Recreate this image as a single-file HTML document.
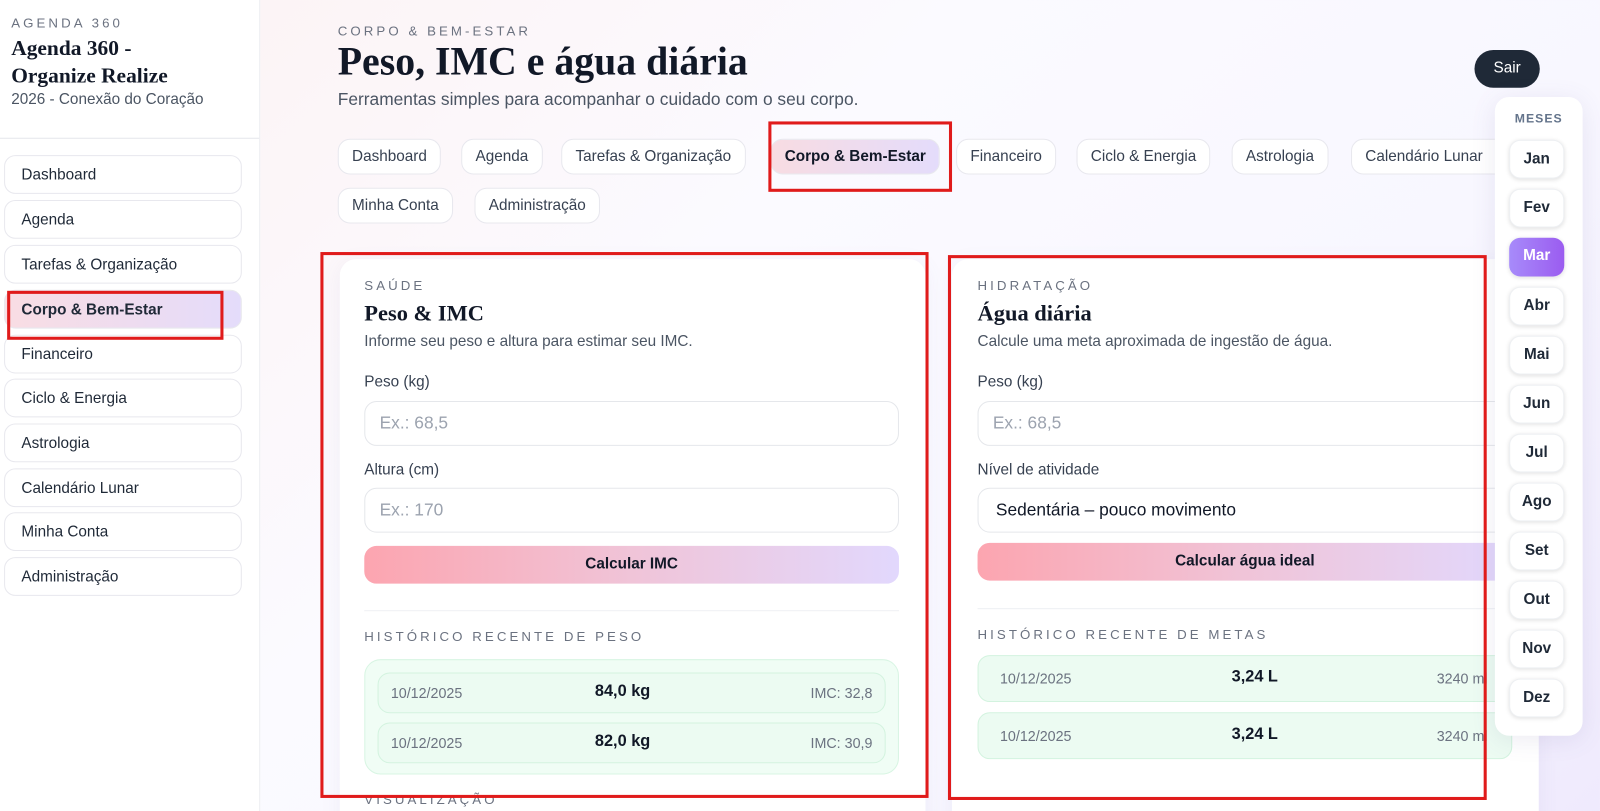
<!DOCTYPE html>
<html><head><meta charset="utf-8">
<style>
*{box-sizing:border-box;margin:0;padding:0}
html,body{width:1600px;height:811px;overflow:hidden}
body{font-family:"Liberation Sans",sans-serif;color:#1e293b;background:linear-gradient(135deg,#fdf2f2 0%,#fbfaff 40%,#f8f7ff 70%,#efeafd 100%);position:relative}
#w{position:absolute;left:0;top:0;width:1568px;height:795px;transform:scale(1.0204);transform-origin:0 0}
.sb{position:absolute;left:0;top:0;width:255px;height:800px;background:#fff;border-right:1px solid #eceef2}
.sb .k{position:absolute;left:11px;top:15px;font-size:13px;letter-spacing:3px;color:#6b7280}
.sb .t{position:absolute;left:11px;top:34px;font-family:"Liberation Serif",serif;font-weight:bold;font-size:21px;line-height:27px;color:#111827}
.sb .s{position:absolute;left:11px;top:89px;font-size:15px;color:#4b5563}
.sb hr{position:absolute;left:0;top:135px;width:254px;border:0;border-top:1px solid #e5e7eb}
.it{position:absolute;left:4px;width:233px;height:38px;border:1px solid #e8e8ee;border-radius:11px;font-size:15px;padding:10px 0 0 16px;color:#1f2937;background:#fff}
.it.a{background:linear-gradient(90deg,#f9dde3,#e4dcfb);font-weight:bold}
.pill{position:absolute;height:35px;border:1px solid #e8e8ee;border-radius:12px;background:#fff;font-size:15px;padding:8px 13px 0;color:#374151;white-space:nowrap}
.pill.a{background:linear-gradient(90deg,#f8dce2,#e4dcfb);font-weight:bold;color:#111827}
.card{position:absolute;background:#fff;border-radius:16px;box-shadow:0 4px 20px rgba(120,110,160,.08)}
.k2{font-size:13px;letter-spacing:3px;color:#6b7280}
.h2{font-family:"Liberation Serif",serif;font-weight:bold;font-size:22px;color:#111827}
.lab{position:absolute;font-size:15px;color:#374151}
.inp{position:absolute;height:44px;border:1px solid #e5e7eb;border-radius:12px;background:#fff;font-size:17px;color:#9ca3af;padding:11px 14px}
.btn{position:absolute;height:37px;border-radius:12px;background:linear-gradient(90deg,#fca5b0,#f0c4d8 50%,#e2d8fd);font-weight:bold;font-size:15px;text-align:center;padding-top:9px;color:#111827}
.hist{position:absolute;background:#f0fdf5;border:1px solid #d8f5e3;border-radius:16px}
.row{position:absolute;height:40px;border:1px solid #d3f3df;border-radius:12px;background:#ecfbf2;font-size:14px;color:#6b7280}
.row span{position:absolute;top:11px}
.row b{position:absolute;top:9px;font-size:16px;color:#111827}
.red{position:absolute;border:3px solid #e01b1b}
.mp{position:absolute;left:1465px;top:95px;width:86px;height:626px;background:#fff;border-radius:14px;box-shadow:0 4px 24px rgba(100,90,150,.12)}
.m{position:absolute;left:14px;width:54px;height:38px;border-radius:11px;background:#fff;box-shadow:0 1px 4px rgba(0,0,0,.12);border:1px solid #eef0f3;font-weight:bold;font-size:15px;text-align:center;padding-top:9px;color:#1f2937}
</style></head><body><div id="w">
<div class="sb">
<div class="k">AGENDA 360</div>
<div class="t">Agenda 360 -<br>Organize Realize</div>
<div class="s">2026 - Conexão do Coração</div>
<hr>
<div class="it" style="top:152px">Dashboard</div>
<div class="it" style="top:196px">Agenda</div>
<div class="it" style="top:240px">Tarefas &amp; Organização</div>
<div class="it a" style="top:284px">Corpo &amp; Bem-Estar</div>
<div class="it" style="top:328px">Financeiro</div>
<div class="it" style="top:371px">Ciclo &amp; Energia</div>
<div class="it" style="top:415px">Astrologia</div>
<div class="it" style="top:459px">Calendário Lunar</div>
<div class="it" style="top:502px">Minha Conta</div>
<div class="it" style="top:546px">Administração</div>
</div>

<div style="position:absolute;left:331px;top:23px" class="k2">CORPO &amp; BEM-ESTAR</div>
<div style="position:absolute;left:331px;top:38px;font-family:'Liberation Serif',serif;font-weight:bold;font-size:39px;color:#111827">Peso, IMC e água diária</div>
<div style="position:absolute;left:331px;top:88px;font-size:17px;color:#4b5563">Ferramentas simples para acompanhar o cuidado com o seu corpo.</div>
<div style="position:absolute;left:1445px;top:49px;width:64px;height:37px;border-radius:19px;background:#1f2937;color:#fff;font-size:15px;text-align:center;padding-top:9px">Sair</div>

<div class="pill" style="left:331px;top:136px">Dashboard</div>
<div class="pill" style="left:452px;top:136px">Agenda</div>
<div class="pill" style="left:550px;top:136px">Tarefas &amp; Organização</div>
<div class="pill a" style="left:755px;top:136px">Corpo &amp; Bem-Estar</div>
<div class="pill" style="left:937px;top:136px">Financeiro</div>
<div class="pill" style="left:1055px;top:136px">Ciclo &amp; Energia</div>
<div class="pill" style="left:1207px;top:136px">Astrologia</div>
<div class="pill" style="left:1324px;top:136px;width:160px">Calendário Lunar</div>
<div class="pill" style="left:331px;top:184px">Minha Conta</div>
<div class="pill" style="left:465px;top:184px">Administração</div>

<div class="card" style="left:333px;top:254px;width:574px;height:580px">
<div class="k2" style="position:absolute;left:24px;top:18px">SAÚDE</div>
<div class="h2" style="position:absolute;left:24px;top:40px">Peso &amp; IMC</div>
<div style="position:absolute;left:24px;top:72px;font-size:15px;color:#4b5563">Informe seu peso e altura para estimar seu IMC.</div>
<div class="lab" style="left:24px;top:112px">Peso (kg)</div>
<div class="inp" style="left:24px;top:139px;width:524px">Ex.: 68,5</div>
<div class="lab" style="left:24px;top:198px">Altura (cm)</div>
<div class="inp" style="left:24px;top:224px;width:524px">Ex.: 170</div>
<div class="btn" style="left:24px;top:281px;width:524px">Calcular IMC</div>
<div style="position:absolute;left:24px;top:344px;width:524px;border-top:1px solid #eef0f3"></div>
<div class="k2" style="position:absolute;left:24px;top:362px">HISTÓRICO RECENTE DE PESO</div>
<div class="hist" style="left:24px;top:392px;width:524px;height:113px">
<div class="row" style="left:12px;top:12px;width:498px"><span style="left:12px">10/12/2025</span><b style="left:212px">84,0 kg</b><span style="right:12px">IMC: 32,8</span></div>
<div class="row" style="left:12px;top:61px;width:498px"><span style="left:12px">10/12/2025</span><b style="left:212px">82,0 kg</b><span style="right:12px">IMC: 30,9</span></div>
</div>
<div class="k2" style="position:absolute;left:24px;top:522px">VISUALIZAÇÃO</div>
</div>

<div class="card" style="left:933px;top:254px;width:575px;height:580px">
<div class="k2" style="position:absolute;left:25px;top:18px">HIDRATAÇÃO</div>
<div class="h2" style="position:absolute;left:25px;top:40px">Água diária</div>
<div style="position:absolute;left:25px;top:72px;font-size:15px;color:#4b5563">Calcule uma meta aproximada de ingestão de água.</div>
<div class="lab" style="left:25px;top:112px">Peso (kg)</div>
<div class="inp" style="left:25px;top:139px;width:524px">Ex.: 68,5</div>
<div class="lab" style="left:25px;top:198px">Nível de atividade</div>
<div class="inp" style="left:25px;top:224px;width:524px;color:#111827;padding-left:17px">Sedentária – pouco movimento</div>
<div class="btn" style="left:25px;top:278px;width:524px">Calcular água ideal</div>
<div style="position:absolute;left:25px;top:342px;width:524px;border-top:1px solid #eef0f3"></div>
<div class="k2" style="position:absolute;left:25px;top:360px">HISTÓRICO RECENTE DE METAS</div>
<div class="row" style="left:25px;top:388px;width:524px;height:46px"><span style="left:21px;top:14px">10/12/2025</span><b style="left:248px;top:12px">3,24 L</b><span style="left:449px;top:14px">3240 ml</span></div>
<div class="row" style="left:25px;top:444px;width:524px;height:46px"><span style="left:21px;top:14px">10/12/2025</span><b style="left:248px;top:12px">3,24 L</b><span style="left:449px;top:14px">3240 ml</span></div>
</div>

<div class="mp">
<div style="position:absolute;left:0;width:86px;top:14px;text-align:center;font-size:12px;font-weight:bold;letter-spacing:1px;color:#64748b">MESES</div>
<div class="m" style="top:42px">Jan</div>
<div class="m" style="top:90px">Fev</div>
<div class="m" style="top:138px;background:linear-gradient(90deg,#a78bfa,#9b5cf0);color:#fff;border:0">Mar</div>
<div class="m" style="top:186px">Abr</div>
<div class="m" style="top:234px">Mai</div>
<div class="m" style="top:282px">Jun</div>
<div class="m" style="top:330px">Jul</div>
<div class="m" style="top:378px">Ago</div>
<div class="m" style="top:426px">Set</div>
<div class="m" style="top:474px">Out</div>
<div class="m" style="top:522px">Nov</div>
<div class="m" style="top:570px">Dez</div>
</div>

<div class="red" style="left:753px;top:119px;width:180px;height:69px"></div>
<div class="red" style="left:314px;top:247px;width:596px;height:535px"></div>
<div class="red" style="left:929px;top:250px;width:528px;height:534px"></div>
<div class="red" style="left:7px;top:285px;width:212px;height:48px"></div>
</div></body></html>
